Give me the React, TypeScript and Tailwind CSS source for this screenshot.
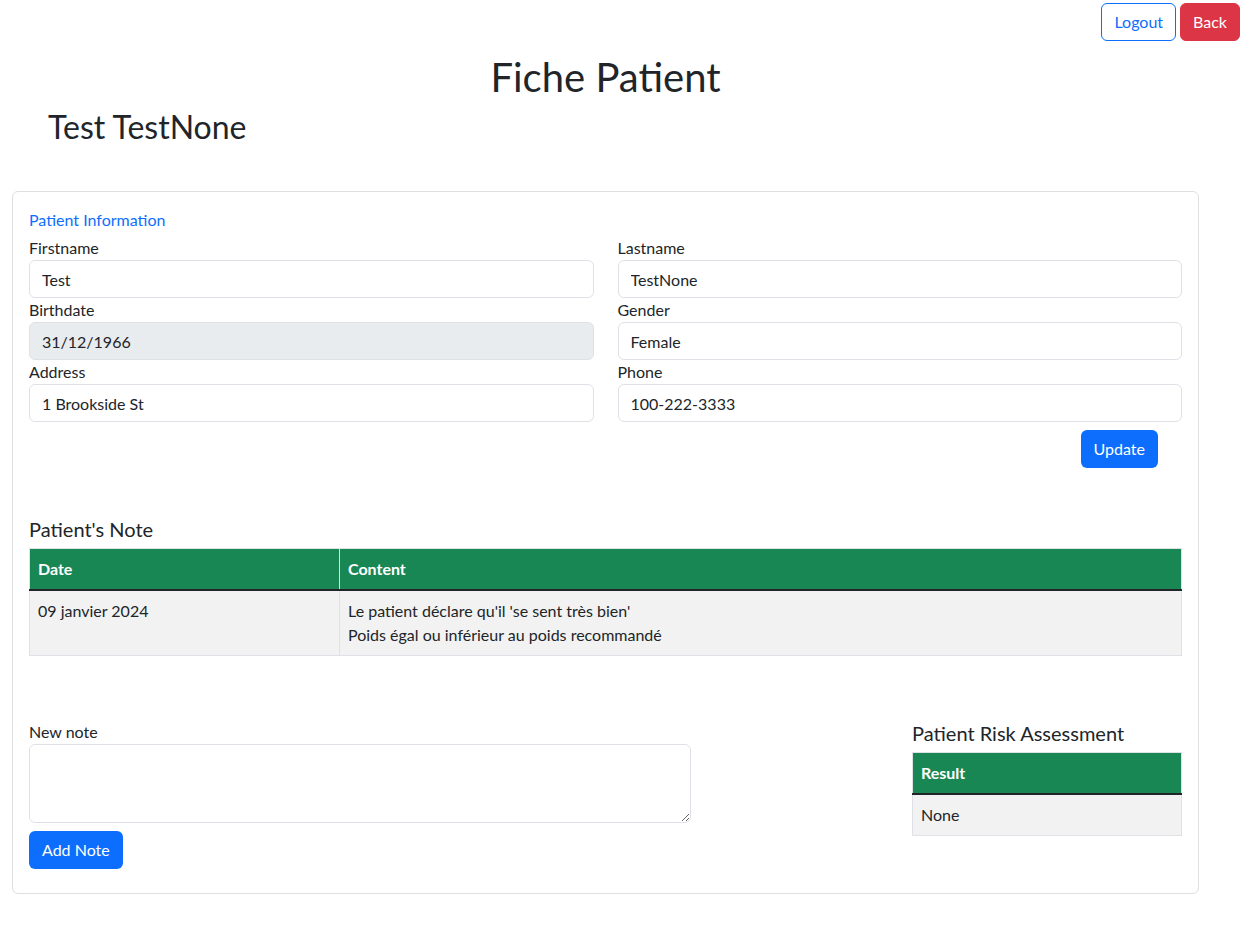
const font = "font-['Segoe_UI','Lato',sans-serif]";

function Field({ label, value, disabled }: { label: string; value: string; disabled?: boolean }) {
  return (
    <div className="flex flex-col">
      <label className="text-[16px] leading-[24px]">{label}</label>
      <input
        readOnly
        value={value}
        className={`h-[38px] rounded-[6px] border border-[#dee2e6] px-[12px] text-[16px] text-[#212529] outline-none ${
          disabled ? "bg-[#e9ecef]" : "bg-white"
        }`}
      />
    </div>
  );
}

export default function App() {
  return (
    <div className={`${font} min-h-[937px] bg-white text-[#212529]`}>
      <div className="flex justify-end gap-[4px] pr-[2px] pt-[3px]">
        <button className="h-[38px] rounded-[6px] border border-[#0d6efd] px-[12px] text-[16px] text-[#0d6efd]">
          Logout
        </button>
        <button className="h-[38px] rounded-[6px] border border-[#dc3545] bg-[#dc3545] px-[12px] text-[16px] text-white">
          Back
        </button>
      </div>

      <div className="ml-[12px] w-[1187px]">
        <h1 className="mt-[12px] text-center text-[40px] leading-[48px] font-normal">Fiche Patient</h1>
        <h2 className="ml-[36px] mt-[7px] text-[32px] leading-[38px] font-normal">Test TestNone</h2>

        <div className="mt-[45px] rounded-[6px] border border-[#dfdfdf] px-[16px] pb-[24px] pt-[16px]">
          <div className="text-[16px] leading-[24px] text-[#0d6efd]">Patient Information</div>
          <div className="mt-[4px] grid grid-cols-2 gap-x-[24px]">
            <Field label="Firstname" value="Test" />
            <Field label="Lastname" value="TestNone" />
            <Field label="Birthdate" value="31/12/1966" disabled />
            <Field label="Gender" value="Female" />
            <Field label="Address" value="1 Brookside St" />
            <Field label="Phone" value="100-222-3333" />
          </div>
          <div className="mt-[8px] flex justify-end pr-[24px]">
            <button className="h-[38px] rounded-[6px] bg-[#0d6efd] px-[13px] text-[16px] text-white">Update</button>
          </div>

          <h5 className="mt-[49px] text-[20px] leading-[24px] font-normal">Patient's Note</h5>
          <table className="mt-[7px] w-full border-collapse border border-[#dee2e6] text-[16px] leading-[24px]">
            <thead>
              <tr className="bg-[#198754] text-white">
                <th className="w-[310px] border-r border-[#dee2e6] px-[8px] py-[8px] text-left font-bold">Date</th>
                <th className="px-[8px] py-[8px] text-left font-bold">Content</th>
              </tr>
            </thead>
            <tbody className="border-t-2 border-[#212529]">
              <tr className="bg-[#f2f2f2]">
                <td className="border-r border-[#dee2e6] px-[8px] py-[8px] align-top">09 janvier 2024</td>
                <td className="px-[8px] py-[8px] align-top">
                  <div>Le patient déclare qu'il 'se sent très bien'</div>
                  <div>Poids égal ou inférieur au poids recommandé</div>
                </td>
              </tr>
            </tbody>
          </table>

          <div className="mt-[64px] flex">
            <div className="flex w-[662px] flex-col">
              <label className="text-[16px] leading-[24px]">New note</label>
              <textarea className="h-[79px] rounded-[6px] border border-[#dee2e6] px-[12px] py-[6px] outline-none" />
              <div className="mt-[8px]">
                <button className="h-[38px] rounded-[6px] bg-[#0d6efd] px-[13px] text-[16px] text-white">Add Note</button>
              </div>
            </div>
            <div className="ml-auto w-[270px]">
              <h5 className="mt-[1px] text-[20px] leading-[24px] font-normal">Patient Risk Assessment</h5>
              <table className="mt-[7px] w-full border-collapse border border-[#dee2e6] text-[16px] leading-[24px]">
                <thead>
                  <tr className="bg-[#198754] text-white">
                    <th className="px-[8px] py-[8px] text-left font-bold">Result</th>
                  </tr>
                </thead>
                <tbody className="border-t-2 border-[#212529]">
                  <tr className="bg-[#f2f2f2]">
                    <td className="px-[8px] py-[8px]">None</td>
                  </tr>
                </tbody>
              </table>
            </div>
          </div>
        </div>
      </div>
    </div>
  );
}
